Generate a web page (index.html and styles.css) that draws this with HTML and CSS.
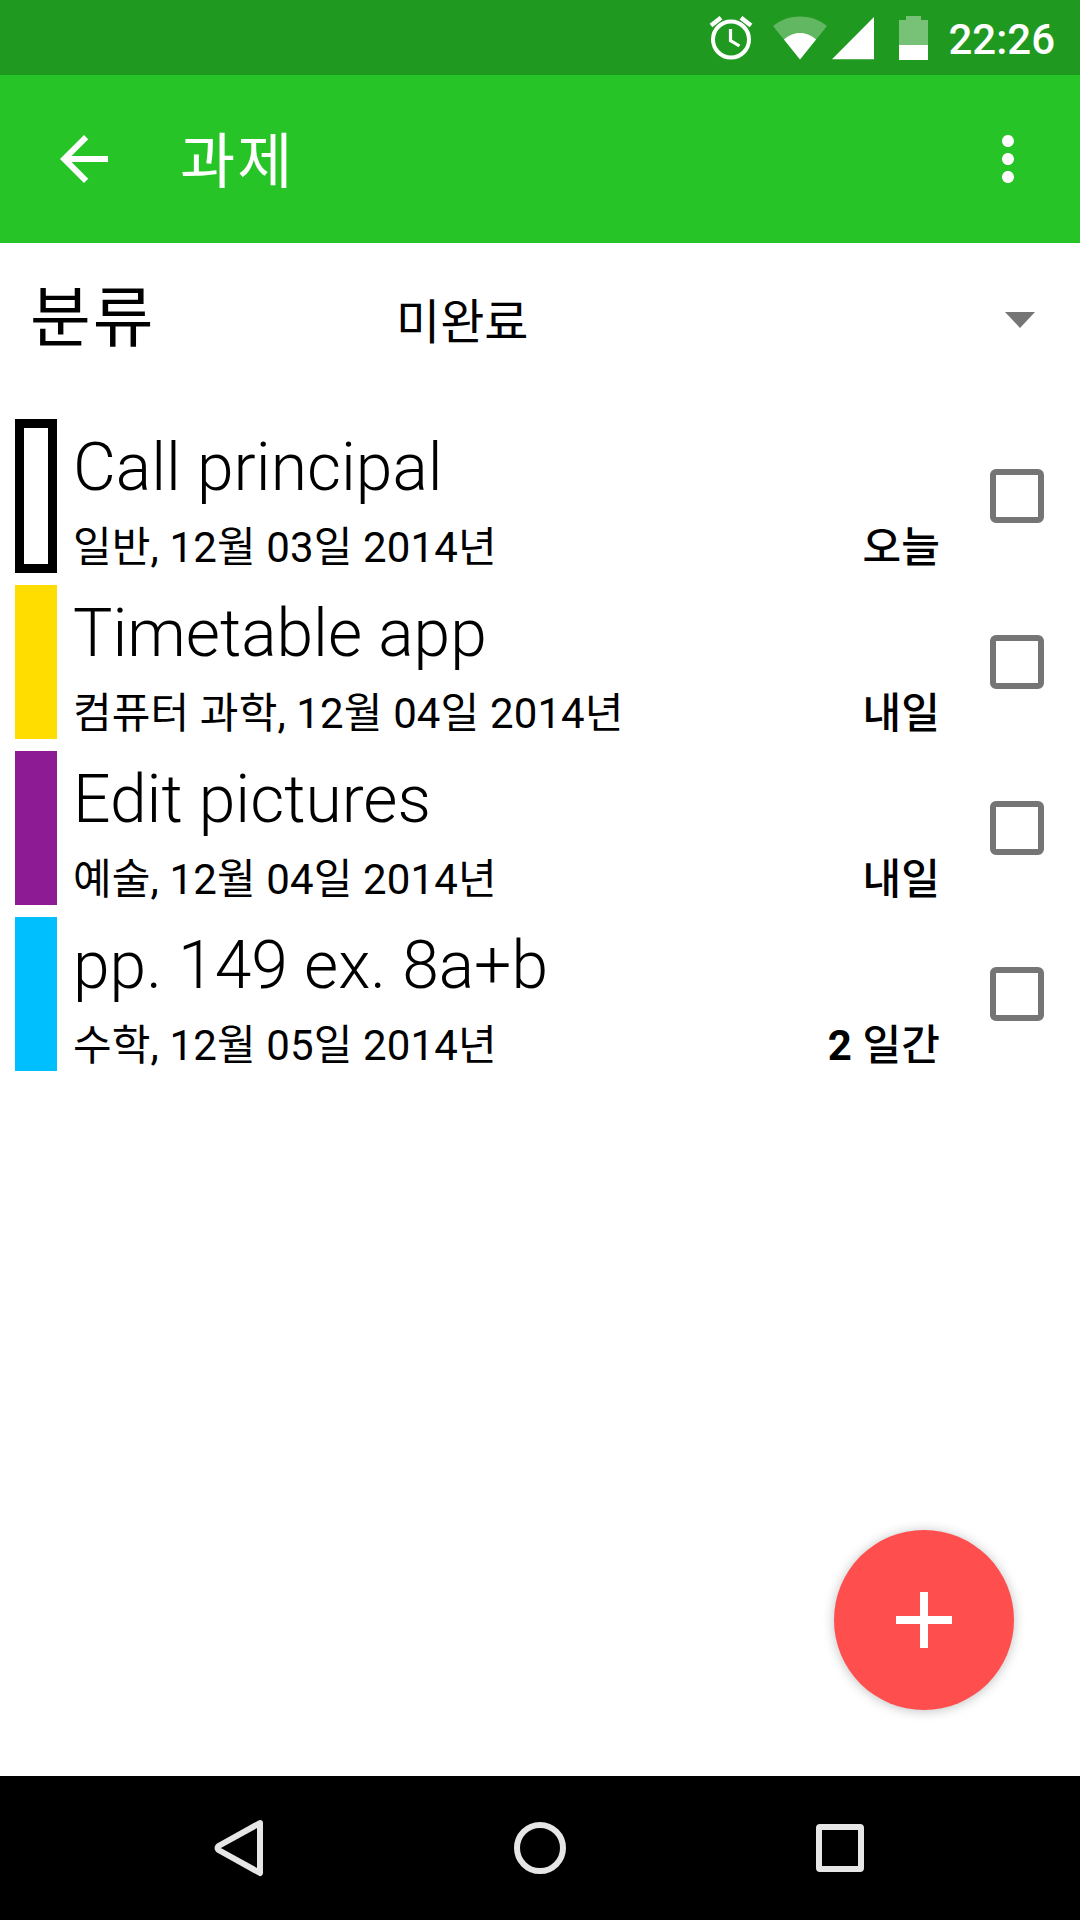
FILE: index.html
```html
<!DOCTYPE html>
<html lang="ko">
<head>
  <meta charset="UTF-8" />
  <title>과제</title>
  <link rel="stylesheet" href="styles.css">
</head>
<body>
  <div class="status-bar">
    <svg class="alarm" width="44" height="44" viewBox="0 0 44 44">
      <circle cx="22" cy="23.5" r="18" fill="none" stroke="#fff" stroke-width="4" />
      <path d="M21.5 13v11.5l9 5.5" fill="none" stroke="#fff" stroke-width="3.2" />
      <path d="M2 9.5L12 1.7M42 9.5L32 1.7" stroke="#fff" stroke-width="4.5" />
    </svg>
    <svg class="wifi" width="54" height="44" viewBox="0 0 54 44">
      <path d="M27 43.500L0 10C8 3.500 17 0.500 27 .5S46 3.500 54 10z" fill="#fff" fill-opacity=".3" />
      <path d="M27 43.500L11 23.500C15.500 19.500 21 17 27 17s11.500 2.500 16 6.500z" fill="#fff" />
    </svg>
    <svg class="signal" width="42" height="44" viewBox="0 0 42 44">
      <path d="M0 43.200L42 1v42.200z" fill="#fff" />
    </svg>
    <svg class="battery" width="29" height="44" viewBox="0 0 29 44">
      <path d="M0 4h7V0h15v4h7v25H0z" fill="#fff" fill-opacity=".4" />
      <path d="M0 29h29v15H0z" fill="#fff" />
    </svg>
    <span class="clock">22:26</span>
  </div>

  <div class="app-bar">
    <svg width="72" height="72" viewBox="0 0 24 24">
      <path d="M20 11H7.830l5.590-5.590L12 4l-8 8 8 8 1.410-1.410L7.830 13H20v-2z" fill="#fff" />
    </svg>
    <h1>과제</h1>
    <svg width="72" height="72" viewBox="0 0 24 24">
      <path d="M12 8c1.100 0 2-.9 2-2s-.9-2-2-2-2 .9-2 2 .9 2 2 2zm0 2c-1.100 0-2 .9-2 2s.9 2 2 2 2-.9 2-2-.9-2-2-2zm0 6c-1.100 0-2 .9-2 2s.9 2 2 2 2-.9 2-2-.9-2-2-2z" fill="#fff" />
    </svg>
  </div>

  <div class="filter">
    <span class="filter-label">분류</span>
    <div class="spinner">
      <span>미완료</span>
      <span class="caret"></span>
    </div>
  </div>

  <div class="list">
    <div class="task">
      <div class="bar general"></div>
      <div class="info">
        <div class="name">Call principal</div>
        <div class="details"><span>일반, 12월 03일 2014년</span><span class="due">오늘</span></div>
      </div>
      <div class="checkbox"></div>
    </div>
    <div class="task">
      <div class="bar cs"></div>
      <div class="info">
        <div class="name">Timetable app</div>
        <div class="details"><span>컴퓨터 과학, 12월 04일 2014년</span><span class="due">내일</span></div>
      </div>
      <div class="checkbox"></div>
    </div>
    <div class="task">
      <div class="bar art"></div>
      <div class="info">
        <div class="name">Edit pictures</div>
        <div class="details"><span>예술, 12월 04일 2014년</span><span class="due">내일</span></div>
      </div>
      <div class="checkbox"></div>
    </div>
    <div class="task">
      <div class="bar math"></div>
      <div class="info">
        <div class="name">pp. 149 ex. 8a+b</div>
        <div class="details"><span>수학, 12월 05일 2014년</span><span class="due"><b>2</b> 일간</span></div>
      </div>
      <div class="checkbox"></div>
    </div>
  </div>

  <div class="fab">
    <svg width="56" height="56" viewBox="0 0 56 56">
      <path d="M24 0h8v24h24v8H32v24h-8V32H0v-8h24z" fill="#fff" />
    </svg>
  </div>

  <div class="nav-bar">
    <svg width="60" height="60" viewBox="0 0 60 60">
      <path d="M50 5L8.500 28Q6.500 30 8.500 32L50 55z" />
    </svg>
    <svg width="60" height="60" viewBox="0 0 60 60">
      <circle cx="30" cy="30" r="23" />
    </svg>
    <svg width="60" height="60" viewBox="0 0 60 60">
      <rect x="9" y="9" width="42" height="42" rx="1" />
    </svg>
  </div>
</body>
</html>
```

FILE: styles.css
```css
body {
  margin: 0;
  width: 1080px;
  height: 1920px;
  display: flex;
  flex-direction: column;
  position: relative;
  overflow: hidden;
  background: #fff;
  color: #000;
  font-family: Roboto, "Noto Sans CJK KR", sans-serif;
}

/* status bar */
.status-bar {
  height: 75px;
  display: flex;
  justify-content: flex-end;
  align-items: center;
  padding-right: 25px;
  box-sizing: border-box;
  background: #1f991f;
  color: #fff;
}
.wifi { margin-left: 20px; }
.signal { margin-left: 5px; }
.battery { margin-left: 25px; }
.clock {
  margin-left: 20px;
  font-size: 42px;
  font-weight: 500;
  line-height: 44px;
  padding-top: 4px;
}

/* title bar */
.app-bar {
  height: 168px;
  display: flex;
  align-items: center;
  padding: 0 36px 0 48px;
  background: #26c426;
  color: #fff;
}
.app-bar h1 {
  flex: 1;
  margin: 0 0 0 60px;
  padding-top: 8px;
  font-size: 60px;
  font-weight: 400;
  letter-spacing: 2px;
  line-height: 72px;
}

/* filter row */
.filter {
  height: 152px;
  display: flex;
  align-items: center;
  padding: 0 45px 0 30px;
}
.filter-label {
  width: 366px;
  font-size: 66px;
  letter-spacing: 2px;
  line-height: 80px;
}
.spinner {
  flex: 1;
  display: flex;
  justify-content: space-between;
  align-items: center;
  padding-top: 2px;
  font-size: 48px;
  line-height: 60px;
}
.spinner span:first-child {
  padding-top: 5px;
}
.caret {
  border: 15px solid transparent;
  border-top: 16px solid #757575;
  border-bottom: 0;
}

/* homework list */
.list {
  flex: 1;
  display: flex;
  flex-direction: column;
  gap: 12px;
  padding: 24px 36px 0 15px;
}
.task {
  height: 154px;
  display: flex;
  align-items: center;
}
.bar {
  width: 42px;
  height: 154px;
  box-sizing: border-box;
}
.general { border: 9px solid #000; }
.cs { background: #ffdd00; }
.art { background: #8c1b94; }
.math { background: #00bfff; }

.info {
  flex: 1;
  margin: 0 50px 0 16px;
  padding-top: 13px;
}
.name {
  font-size: 66px;
  font-weight: 300;
  line-height: 80px;
}
.details {
  display: flex;
  justify-content: space-between;
  font-size: 42px;
  letter-spacing: 0.13px;
  line-height: 60px;
  padding-top: 10px;
}
.due { font-weight: 500; }
.checkbox {
  width: 54px;
  height: 54px;
  box-sizing: border-box;
  border: 6px solid #757575;
  border-radius: 6px;
}

.fab {
  position: absolute;
  left: 834px;
  top: 1530px;
  width: 180px;
  height: 180px;
  display: flex;
  justify-content: center;
  align-items: center;
  border-radius: 50%;
  background: #ff4e4e;
  box-shadow: 0 1px 12px rgba(0, 0, 0, 0.25);
}

/* navigation bar */
.nav-bar {
  height: 144px;
  display: flex;
  justify-content: center;
  align-items: center;
  gap: 240px;
  background: #000;
}
.nav-bar svg {
  fill: none;
  stroke: #e6e6e6;
  stroke-width: 6;
  stroke-linejoin: round;
}
```
